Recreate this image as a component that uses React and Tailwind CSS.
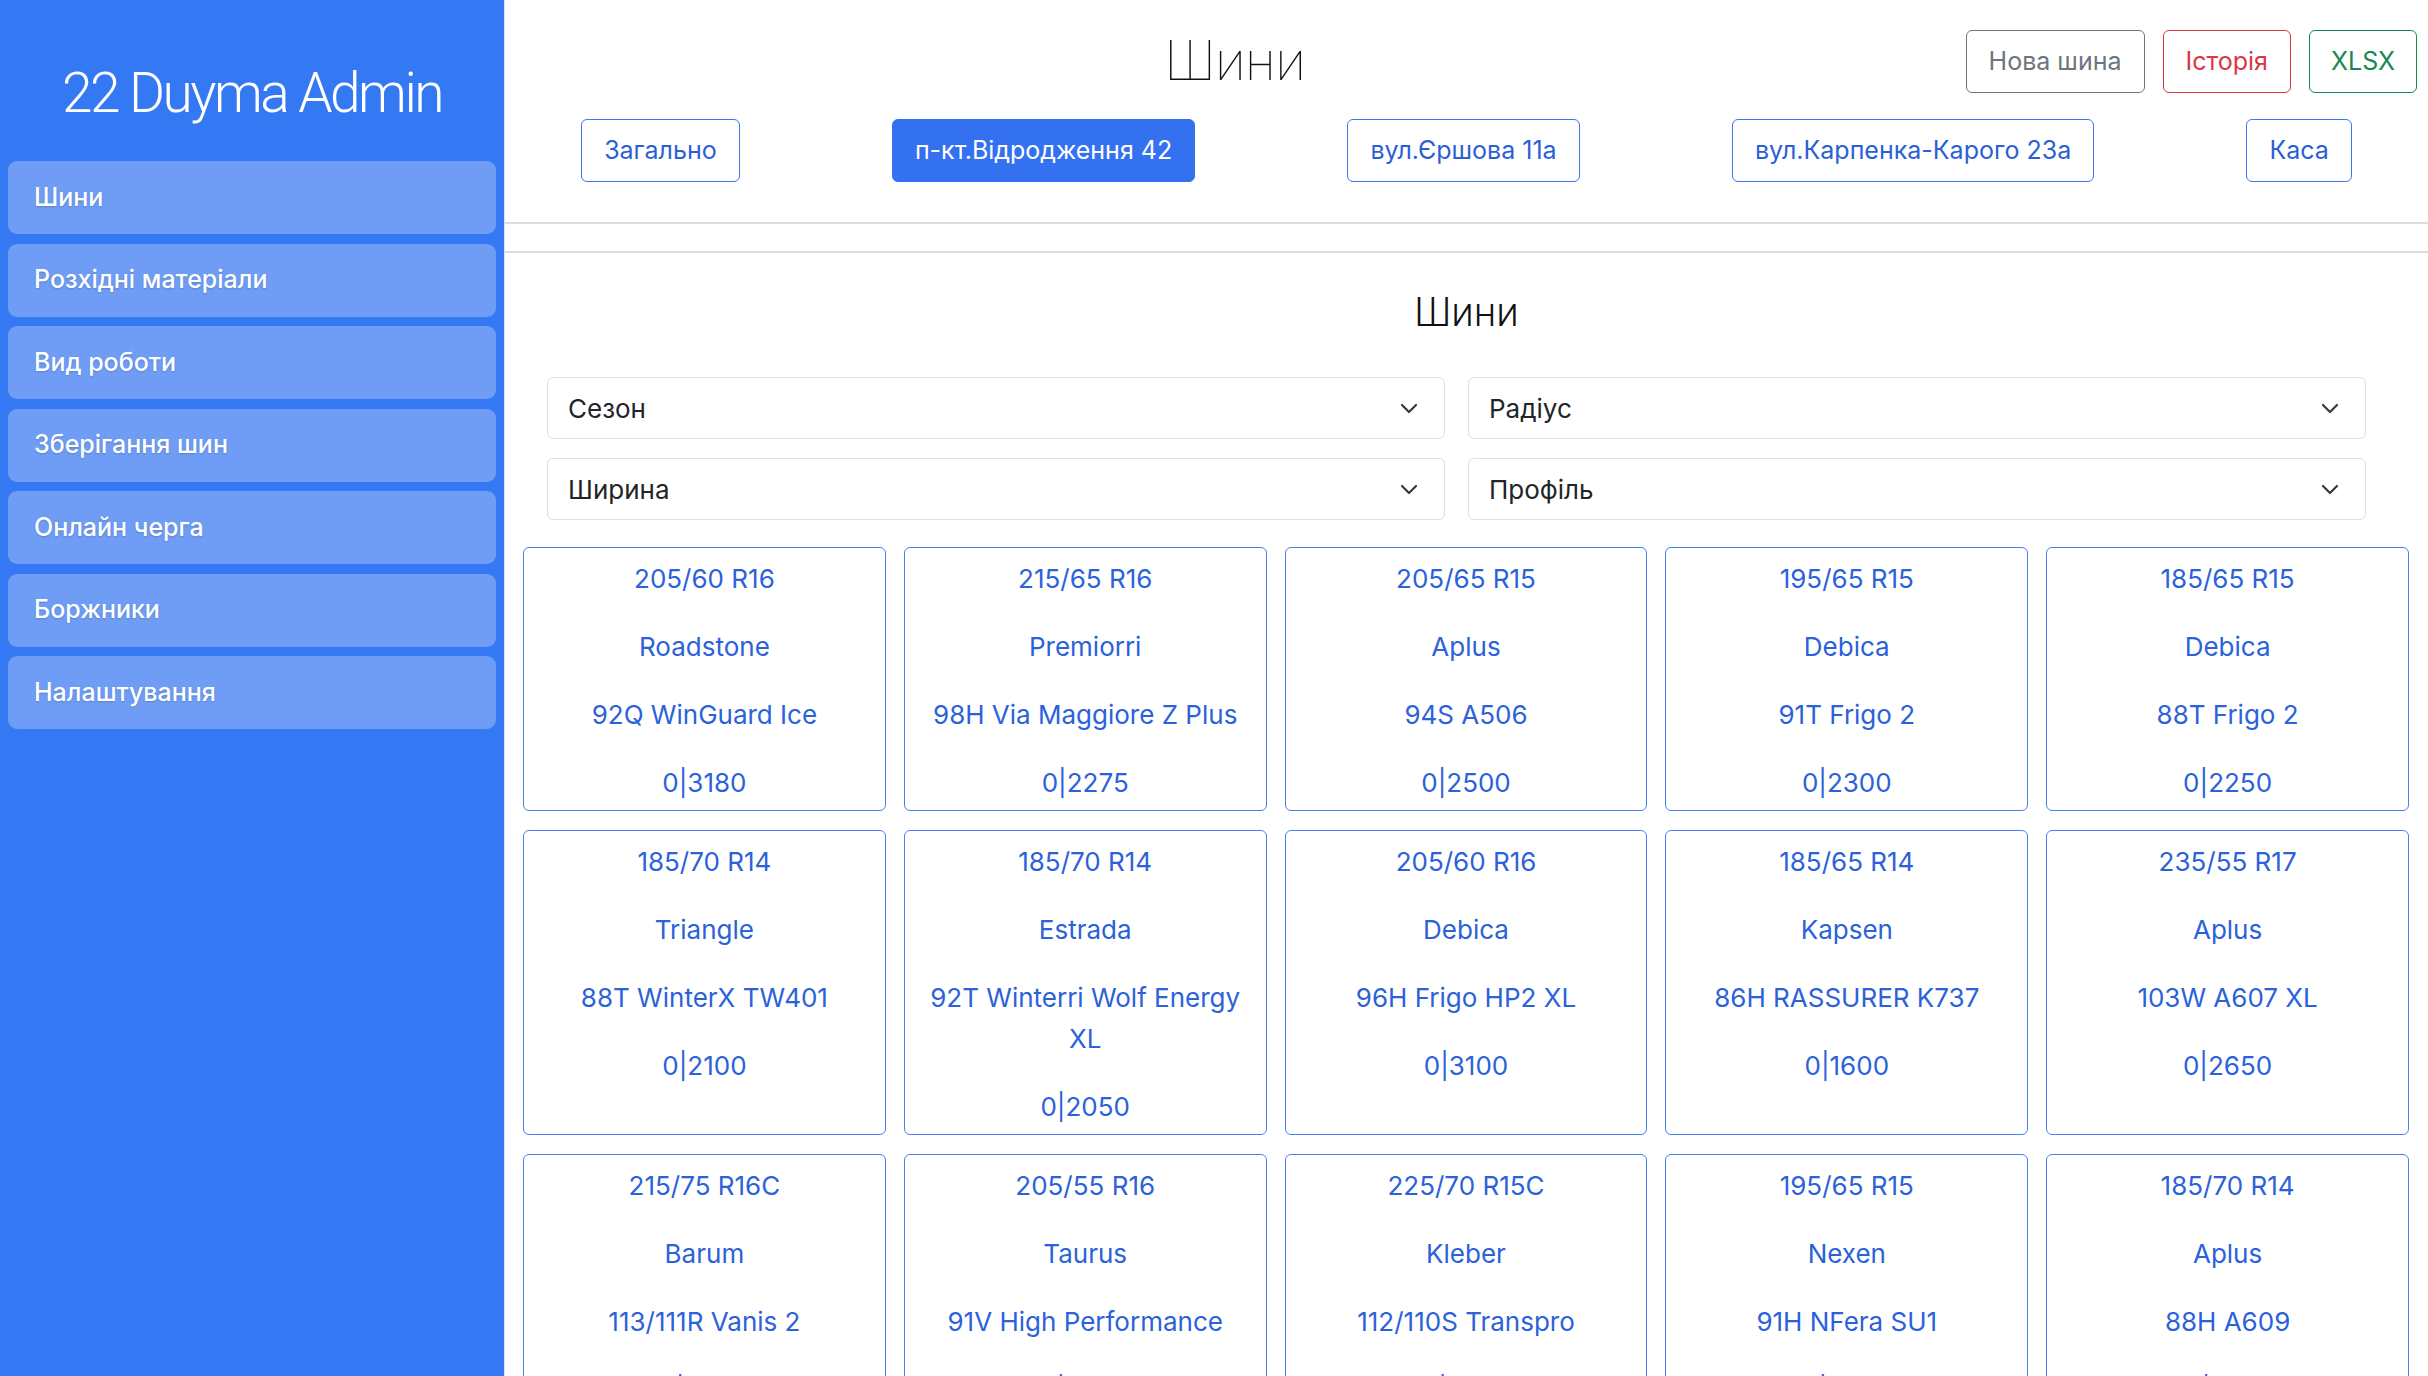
import React from "react";

const NAV = [
  "Шини",
  "Розхідні матеріали",
  "Вид роботи",
  "Зберігання шин",
  "Онлайн черга",
  "Боржники",
  "Налаштування",
];

const TABS = [
  { label: "Загально", active: false },
  { label: "п-кт.Відродження 42", active: true },
  { label: "вул.Єршова 11а", active: false },
  { label: "вул.Карпенка-Карого 23а", active: false },
  { label: "Каса", active: false },
];

const TIRES = [
  ["205/60 R16", "Roadstone", "92Q WinGuard Ice", "0|3180"],
  ["215/65 R16", "Premiorri", "98H Via Maggiore Z Plus", "0|2275"],
  ["205/65 R15", "Aplus", "94S A506", "0|2500"],
  ["195/65 R15", "Debica", "91T Frigo 2", "0|2300"],
  ["185/65 R15", "Debica", "88T Frigo 2", "0|2250"],
  ["185/70 R14", "Triangle", "88T WinterX TW401", "0|2100"],
  ["185/70 R14", "Estrada", "92T Winterri Wolf Energy XL", "0|2050"],
  ["205/60 R16", "Debica", "96H Frigo HP2 XL", "0|3100"],
  ["185/65 R14", "Kapsen", "86H RASSURER K737", "0|1600"],
  ["235/55 R17", "Aplus", "103W A607 XL", "0|2650"],
  ["215/75 R16C", "Barum", "113/111R Vanis 2", "0|3900"],
  ["205/55 R16", "Taurus", "91V High Performance", "0|2400"],
  ["225/70 R15C", "Kleber", "112/110S Transpro", "0|3700"],
  ["195/65 R15", "Nexen", "91H NFera SU1", "0|2350"],
  ["185/70 R14", "Aplus", "88H A609", "0|1900"],
];

function Chevron() {
  return (
    <svg width="18" height="11" viewBox="0 0 18 11" fill="none">
      <polyline
        points="2,2 9,9 16,2"
        stroke="#343a40"
        strokeWidth="2.2"
        strokeLinecap="round"
        strokeLinejoin="round"
      />
    </svg>
  );
}

function Select({ label }) {
  return (
    <div className="h-[62px] border border-[#dcdfe3] rounded-[6px] pl-[20px] pr-[26px] flex items-center justify-between text-[26px] text-[#212529] bg-white">
      <span>{label}</span>
      <Chevron />
    </div>
  );
}

export default function App() {
  return (
    <div
      className="flex h-screen w-full overflow-hidden bg-white"
      style={{ fontFamily: "Inter, 'Noto Sans', sans-serif" }}
    >
      <aside className="w-[505px] shrink-0 bg-[#3478f3] flex flex-col pt-[66px] px-[8px] border-r border-[#d5e4fd]">
        <div
          className="text-center text-white text-[55px] leading-[55px] font-light tracking-[-0.045em] mb-[40px]"
          style={{ fontFamily: "Roboto, sans-serif" }}
        >
          22 Duyma Admin
        </div>
        <nav className="flex flex-col gap-[9.5px]">
          {NAV.map((n) => (
            <div
              key={n}
              className="h-[73px] rounded-[9px] bg-[#6f9df5] flex items-center pl-[26px] text-white text-[25px] font-medium [text-shadow:0_1px_2px_rgba(0,0,0,0.18)]"
            >
              {n}
            </div>
          ))}
        </nav>
      </aside>

      <main className="flex-1 flex flex-col min-w-0">
        <header className="border-b-2 border-[#dcdcdc] pt-[30px] pb-[40px]">
          <div className="flex items-center h-[63px]">
            <div
              className="flex-1 text-center text-[55px] leading-none font-thin text-[#111]"
              style={{ fontFamily: "Roboto, sans-serif" }}
            >
              Шини
            </div>
            <div className="flex gap-[18px] mr-[11px] text-[25px]">
              <button className="h-[63px] px-[22px] border border-[#6c757d] rounded-[6px] text-[#6c757d]">
                Нова шина
              </button>
              <button className="h-[63px] px-[22px] border border-[#dc3545] rounded-[6px] text-[#dc3545]">
                Історія
              </button>
              <button className="h-[63px] px-[21px] border border-[#198754] rounded-[6px] text-[#198754]">
                XLSX
              </button>
            </div>
          </div>
          <div className="flex justify-around mt-[26px]">
            {TABS.map((t) =>
              t.active ? (
                <button
                  key={t.label}
                  className="h-[63px] px-[22px] rounded-[6px] bg-[#3471f0] border border-[#3471f0] text-white text-[25px]"
                >
                  {t.label}
                </button>
              ) : (
                <button
                  key={t.label}
                  className="h-[63px] px-[22px] rounded-[6px] border border-[#3b78f0] text-[#2a5fd6] text-[25px]"
                >
                  {t.label}
                </button>
              )
            )}
          </div>
        </header>
        <div className="mt-[27px] border-t-2 border-[#dcdcdc]" />

        <div
          className="mt-[40px] text-center text-[40px] leading-none font-light text-[#111]"
          style={{ fontFamily: "Roboto, sans-serif" }}
        >
          Шини
        </div>

        <div className="mt-[44px] ml-[42px] mr-[62px] grid grid-cols-2 gap-x-[23px] gap-y-[19px]">
          <Select label="Сезон" />
          <Select label="Радіус" />
          <Select label="Ширина" />
          <Select label="Профіль" />
        </div>

        <div className="mt-[27px] ml-[18px] mr-[19px] grid grid-cols-5 gap-x-[18px] gap-y-[19px]">
          {TIRES.map((t, i) => (
            <div
              key={i}
              className="border border-[#4a80ee] rounded-[6px] pt-[10px] pb-[7px] px-[16px] text-center text-[26px] leading-[41px] text-[#2b62da]"
            >
              {t.map((line, j) => (
                <p key={j} className={j < 3 ? "mb-[27px]" : ""}>
                  {line}
                </p>
              ))}
            </div>
          ))}
        </div>
      </main>
    </div>
  );
}
